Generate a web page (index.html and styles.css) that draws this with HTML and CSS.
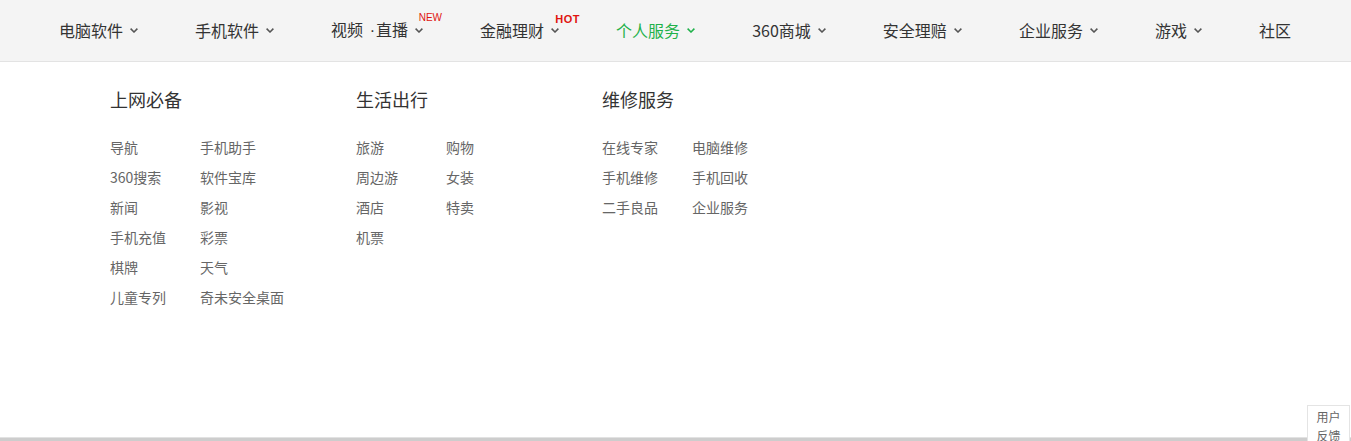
FILE: index.html
```html
<!DOCTYPE html>
<html lang="zh-CN">
<head>
<meta charset="utf-8">
<title>360</title>
<link rel="stylesheet" href="styles.css">
</head>
<body>
<div class="page">
  <nav class="nav">
    <a class="nav-item"><span class="label">电脑软件</span><svg class="chev" viewBox="0 0 8 5"><path d="M0.6 0.6 L4 4 L7.4 0.6" /></svg></a>
    <a class="nav-item"><span class="label">手机软件</span><svg class="chev" viewBox="0 0 8 5"><path d="M0.6 0.6 L4 4 L7.4 0.6" /></svg></a>
    <a class="nav-item"><span class="label">视频 <span class="dot">·</span>直播</span><svg class="chev" viewBox="0 0 8 5"><path d="M0.6 0.6 L4 4 L7.4 0.6" /></svg><span class="badge badge-new">NEW</span></a>
    <a class="nav-item"><span class="label">金融理财</span><svg class="chev" viewBox="0 0 8 5"><path d="M0.6 0.6 L4 4 L7.4 0.6" /></svg><span class="badge badge-hot">HOT</span></a>
    <a class="nav-item active"><span class="label">个人服务</span><svg class="chev" viewBox="0 0 8 5"><path d="M0.6 0.6 L4 4 L7.4 0.6" /></svg></a>
    <a class="nav-item"><span class="label">360商城</span><svg class="chev" viewBox="0 0 8 5"><path d="M0.6 0.6 L4 4 L7.4 0.6" /></svg></a>
    <a class="nav-item"><span class="label">安全理赔</span><svg class="chev" viewBox="0 0 8 5"><path d="M0.6 0.6 L4 4 L7.4 0.6" /></svg></a>
    <a class="nav-item"><span class="label">企业服务</span><svg class="chev" viewBox="0 0 8 5"><path d="M0.6 0.6 L4 4 L7.4 0.6" /></svg></a>
    <a class="nav-item"><span class="label">游戏</span><svg class="chev" viewBox="0 0 8 5"><path d="M0.6 0.6 L4 4 L7.4 0.6" /></svg></a>
    <a class="nav-item"><span class="label">社区</span></a>
  </nav>
  <div class="dropdown">
    <section class="group">
      <h3 class="group-title">上网必备</h3>
      <ul class="links">
        <li>导航</li><li>手机助手</li>
        <li>360搜索</li><li>软件宝库</li>
        <li>新闻</li><li>影视</li>
        <li>手机充值</li><li>彩票</li>
        <li>棋牌</li><li>天气</li>
        <li>儿童专列</li><li>奇未安全桌面</li>
      </ul>
    </section>
    <section class="group">
      <h3 class="group-title">生活出行</h3>
      <ul class="links">
        <li>旅游</li><li>购物</li>
        <li>周边游</li><li>女装</li>
        <li>酒店</li><li>特卖</li>
        <li>机票</li>
      </ul>
    </section>
    <section class="group">
      <h3 class="group-title">维修服务</h3>
      <ul class="links">
        <li>在线专家</li><li>电脑维修</li>
        <li>手机维修</li><li>手机回收</li>
        <li>二手良品</li><li>企业服务</li>
      </ul>
    </section>
  </div>
  <div class="bottom-bar"></div>
  <div class="feedback">用户<br>反馈</div>
</div>
</body>
</html>
```
FILE: styles.css
```css
* { box-sizing: border-box; }
html, body {
  margin: 0;
  padding: 0;
  background: #fff;
  font-family: "Noto Sans CJK SC", "Noto Sans", sans-serif;
}
.page {
  width: 1351px;
  height: 441px;
  display: flex;
  flex-direction: column;
  overflow: hidden;
}
.nav {
  height: 62px;
  flex: none;
  background: #f4f4f4;
  border-bottom: 1px solid #e3e3e3;
  display: flex;
  align-items: center;
  justify-content: space-between;
  padding: 0 60px 2px 59px;
}
.nav-item {
  position: relative;
  display: flex;
  align-items: center;
  font-size: 16px;
  line-height: 24px;
  color: #333;
  white-space: nowrap;
}
.label { white-space: pre; }
.label .dot {
  font-family: "Liberation Sans", sans-serif;
  margin: 0 1px 0 3px;
}
.chev {
  width: 8px;
  height: 5px;
  margin-left: 7px;
  margin-top: 1px;
  fill: none;
  stroke: #555;
  stroke-width: 1.5;
}
.nav-item.active { color: #1fb14a; }
.nav-item.active .chev { stroke: #1fb14a; }
.badge {
  position: absolute;
  top: -5px;
  font-family: "Liberation Sans", sans-serif;
  color: #e0140f;
  line-height: 12px;
}
.badge-new {
  right: -19px;
  font-size: 10px;
}
.badge-hot {
  right: -21px;
  font-size: 11px;
  font-weight: bold;
  letter-spacing: 0.5px;
}
.dropdown {
  flex: 1;
  display: flex;
  padding: 25px 0 0 110px;
}
.group {
  width: 246px;
}
.group-title {
  margin: 0;
  font-size: 18px;
  line-height: 24px;
  font-weight: normal;
  color: #333;
}
.links {
  list-style: none;
  margin: 21px 0 0;
  padding: 0;
  display: grid;
  grid-template-columns: 90px 90px;
}
.links li {
  font-size: 14px;
  line-height: 30px;
  color: #666;
  white-space: nowrap;
}
.bottom-bar {
  flex: none;
  height: 4px;
  background: #cdcdcd;
  border-top: 1px solid #e2e2e2;
}
.feedback {
  position: absolute;
  left: 1307px;
  top: 405px;
  width: 43px;
  height: 40px;
  background: #fff;
  border: 1px solid #e4e4e4;
  border-bottom: none;
  font-size: 12px;
  line-height: 19px;
  color: #666;
  text-align: center;
  padding-top: 1px;
}
```
